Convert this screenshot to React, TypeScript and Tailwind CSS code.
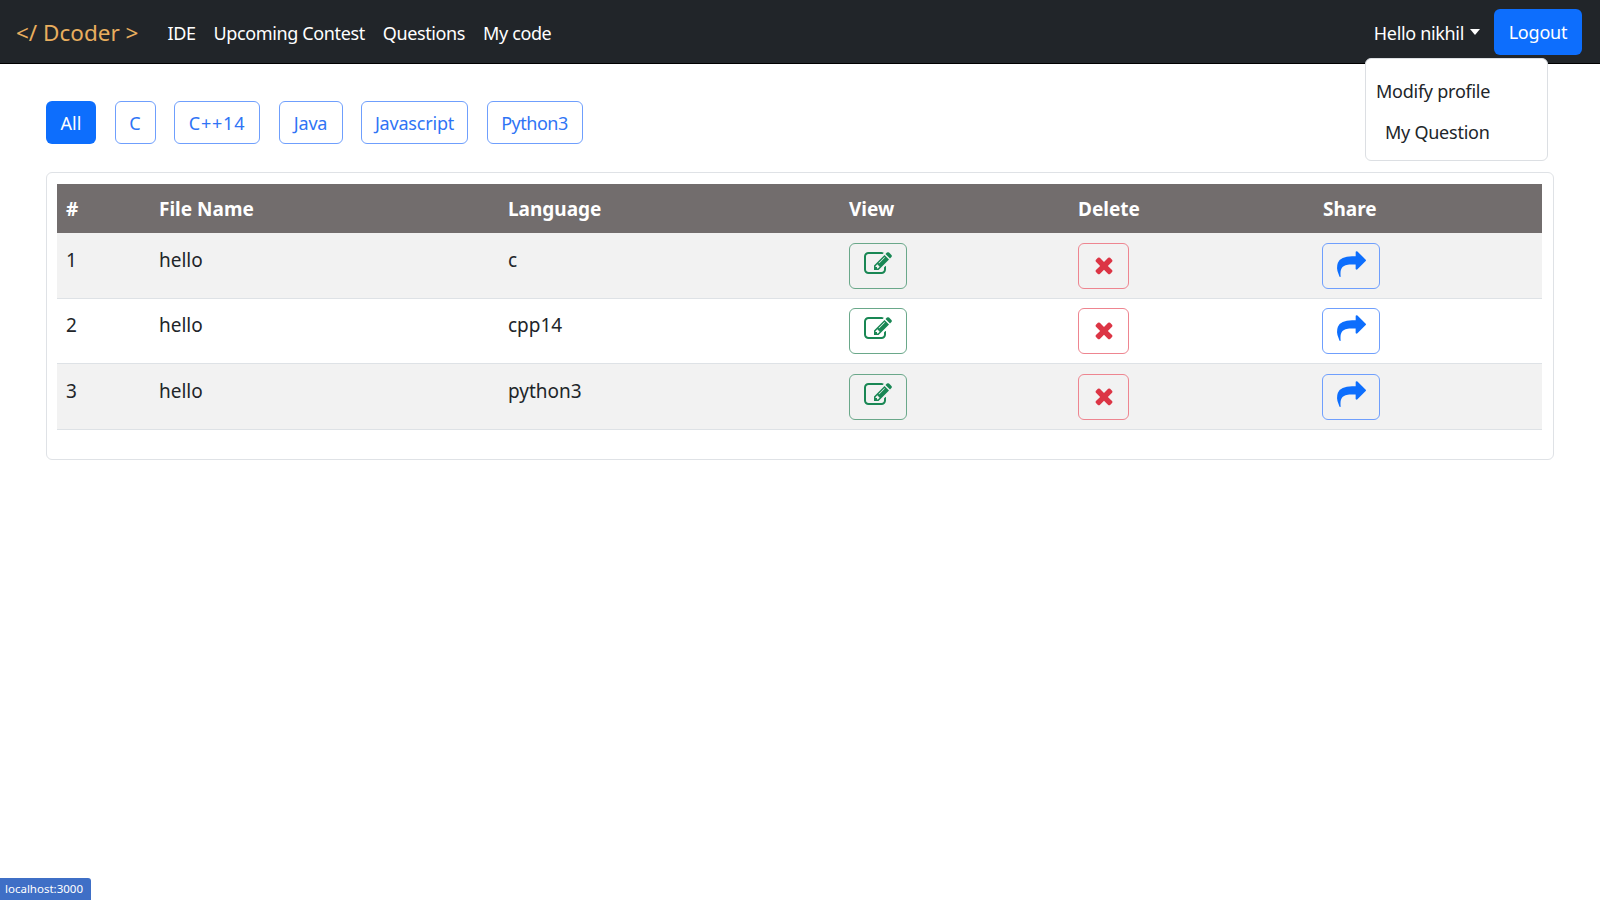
// App.tsx
import React from 'react';

const filters = [
  { label: 'C', className: 'w-[41px]' },
  { label: 'C++14', className: 'w-[86px] tracking-[0.8px]' },
  { label: 'Java', className: 'w-[64px] tracking-[-0.2px]' },
  { label: 'Javascript', className: 'w-[107px] tracking-[-0.2px]' },
  { label: 'Python3', className: 'w-[96px] tracking-[-0.5px]' },
];
const files = [
  { id: 1, name: 'hello', language: 'c', height: 'h-[65px]', textTop: 'pt-[13px]', buttonTop: 'pt-[10px]' },
  { id: 2, name: 'hello', language: 'cpp14', height: 'h-[65px]', textTop: 'pt-[12px]', buttonTop: 'pt-[9px]' },
  { id: 3, name: 'hello', language: 'python3', height: 'h-[66px]', textTop: 'pt-[13px]', buttonTop: 'pt-[10px]' },
];

const EditIcon = () => (
  <svg viewBox="0 0 1792 1792" className="h-[28px] w-[28px] -mt-[4px] fill-current">
    <path d="M888 1184l116-116-152-152-116 116v56h96v96h56zm440-720q-16-16-33 1l-350 350q-17 17-1 33t33-1l350-350q17-17 1-33zm80 594v190q0 119-84.500 203.500t-203.500 84.500h-832q-119 0-203.500-84.500t-84.500-203.500v-832q0-119 84.500-203.500t203.500-84.500h832q63 0 117 25 15 7 18 23 3 17-9 29l-49 49q-14 14-32 8-23-6-45-6h-832q-66 0-113 47t-47 113v832q0 66 47 113t113 47h832q66 0 113-47t47-113v-126q0-13 9-22l64-64q15-15 35-7t20 29zm-96-738l288 288-672 672h-288v-288zm444 132l-92 92-288-288 92-92q28-28 68-28t68 28l152 152q28 28 28 68t-28 68z" />
  </svg>
);

const CrossIcon = () => (
  <svg viewBox="0 0 1408 1792" className="h-[26px] w-[20px] -mt-[2px] fill-current">
    <path d="M1298 1322q0 40-28 68l-136 136q-28 28-68 28t-68-28l-294-294-294 294q-28 28-68 28t-68-28l-136-136q-28-28-28-68t28-68l294-294-294-294q-28-28-28-68t28-68l136-136q28-28 68-28t68 28l294 294 294-294q28-28 68-28t68 28l136 136q28 28 28 68t-28 68l-294 294 294 294q28 28 28 68z" />
  </svg>
);

const ShareIcon = () => (
  <svg viewBox="0 0 1792 1792" className="h-[29px] w-[29px] -mt-[4px] fill-current">
    <path d="M1792 640q0 26-19 45l-512 512q-19 19-45 19t-45-19-19-45v-256h-224q-98 0-175.500 6t-154 21.500-133 42.500-105.500 69.500-79.500 100.500-48 138-16.500 190q0 54 5 121 0 6 2.500 23.500t2.500 26.500q0 15-8.500 25t-23.500 10q-16 0-28-17-7-9-13-22t-13.500-30-10.500-24q-127-285-127-451 0-199 53-333 162-403 875-403h224v-256q0-26 19-45t45-19 45 19l512 512q19 19 19 45z" />
  </svg>
);

const App: React.FC = () => {
  return (
    <div className="relative h-[900px] overflow-hidden bg-white text-[19px] text-[#212529] font-['Noto_Sans',sans-serif]">
      <nav className="h-[64px] bg-[#212529] border-b border-black flex items-center pl-4 pr-[18px] text-[18px]">
        <a className="text-[22.5px] text-[#e8ae5e] mr-[29px] pt-[3px]">&lt;/ Dcoder &gt;</a>
        <div className="flex gap-[18px] text-white pt-[3px] tracking-[-0.38px]">
          <a>IDE</a>
          <a>Upcoming Contest</a>
          <a>Questions</a>
          <a>My code</a>
        </div>
        <div className="ml-auto flex items-center gap-[14px] text-white">
          <div className="flex items-center pt-[3px] tracking-[-0.33px]">
            Hello nikhil
            <span className="ml-[6px] -mt-[3px] border-x-[5px] border-t-[6px] border-x-transparent border-t-white" />
          </div>
          <button className="h-[46px] w-[88px] rounded-md bg-[#0d6efd] text-white pt-[1px] tracking-[-0.2px]">Logout</button>
        </div>
      </nav>

      <div className="absolute right-[52px] top-[58px] z-10 w-[183px] h-[103px] rounded-md border border-[#dcdfe3] bg-white pt-[11px] text-[18px] tracking-[-0.25px]">
        <div className="h-[42px] pl-[10px] leading-[42px]">Modify profile</div>
        <div className="h-[41px] pl-[19px] leading-[41px]">My Question</div>
      </div>

      <div className="px-[46px] pt-[37px]">
        <div className="flex gap-[18.5px] text-[18px]">
          <button className="h-[43px] w-[50px] rounded-md bg-[#0d6efd] text-white pt-[2px]">All</button>
          {filters.map((f) => (
            <button key={f.label} className={`h-[43px] ${f.className} rounded-md border border-[#6f9ffd] text-[#2f74f5] pt-[2px]`}>
              {f.label}
            </button>
          ))}
        </div>

        <div className="mt-[28px] h-[288px] rounded-md border border-[#dfe2e6] pl-[10px] pr-[11px] pt-[11px]">
          <table className="w-full table-fixed border-collapse">
            <colgroup>
              <col className="w-[93px]" />
              <col className="w-[349px]" />
              <col className="w-[341px]" />
              <col className="w-[229px]" />
              <col className="w-[245px]" />
              <col />
            </colgroup>
            <thead>
              <tr className="h-[49px] bg-[#726d6d] text-white text-left">
                <th className="px-[9px] pt-[2px] font-bold">#</th>
                <th className="px-[9px] pt-[2px] font-bold">File Name</th>
                <th className="px-[9px] pt-[2px] font-bold">Language</th>
                <th className="px-[9px] pt-[2px] font-bold">View</th>
                <th className="px-[9px] pt-[2px] font-bold">Delete</th>
                <th className="px-[9px] pt-[2px] font-bold">Share</th>
              </tr>
            </thead>
            <tbody>
              {files.map((file) => (
                <tr key={file.id} className={`${file.height} border-b border-[#dee2e6] ${file.id % 2 === 1 ? 'bg-[#f2f2f2]' : 'bg-white'}`}>
                  <td className={`px-[9px] align-top ${file.textTop}`}>{file.id}</td>
                  <td className={`px-[9px] align-top ${file.textTop}`}>{file.name}</td>
                  <td className={`px-[9px] align-top ${file.textTop}`}>{file.language}</td>
                  <td className={`px-[9px] align-top ${file.buttonTop}`}>
                    <button className="flex h-[46px] w-[58px] items-center justify-center rounded-md border border-[#6aa88a] text-[#198754]">
                      <EditIcon />
                    </button>
                  </td>
                  <td className={`px-[9px] align-top ${file.buttonTop}`}>
                    <button className="flex h-[46px] w-[51px] items-center justify-center rounded-md border border-[#ee8590] text-[#dc3545]">
                      <CrossIcon />
                    </button>
                  </td>
                  <td className={`px-[9px] align-top ${file.buttonTop}`}>
                    <button className="flex h-[46px] w-[58px] -ml-[1px] items-center justify-center rounded-md border border-[#6f9ffd] text-[#0d6efd]">
                      <ShareIcon />
                    </button>
                  </td>
                </tr>
              ))}
            </tbody>
          </table>
        </div>
      </div>

      <div className="absolute bottom-0 left-0 h-[22px] w-[91px] rounded-tr-[3px] bg-[#3f6fc6] pl-[5px] text-[11.5px] leading-[22px] text-white">
        localhost:3000
      </div>
    </div>
  );
};

export default App;
